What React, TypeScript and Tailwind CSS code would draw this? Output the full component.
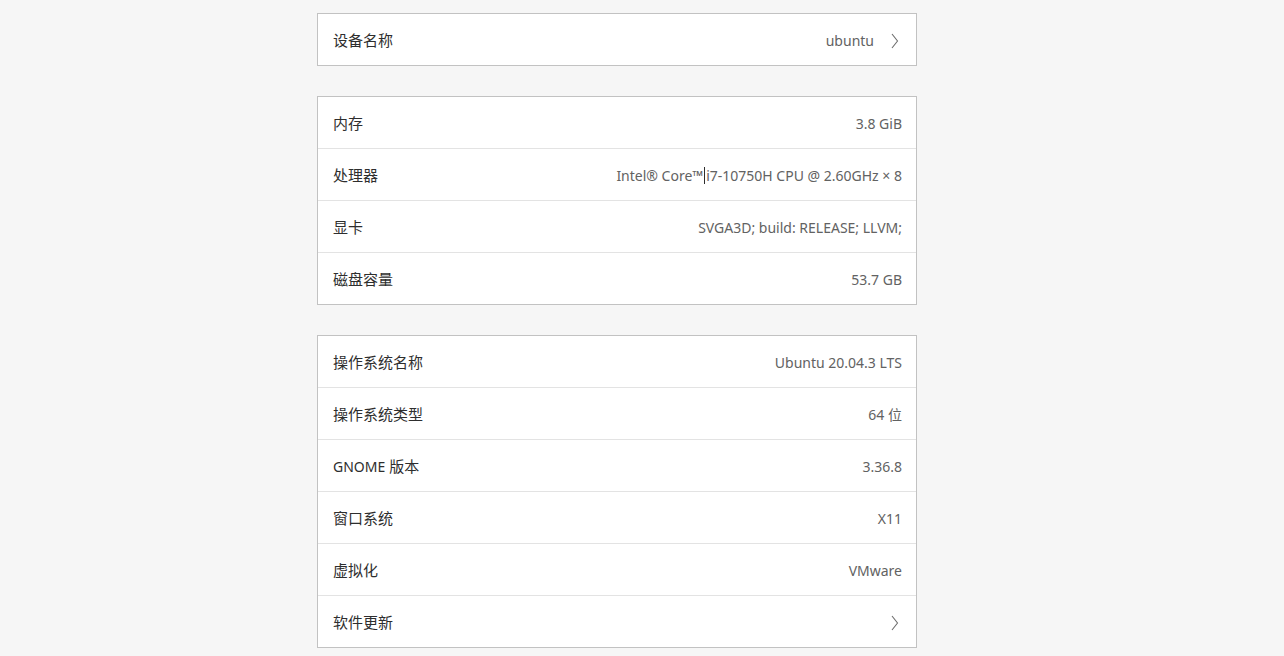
import React from 'react';

type Row = { label: string; value?: string; chevron?: boolean; caret?: boolean };

const groups: Row[][] = [
  [{ label: '设备名称', value: 'ubuntu', chevron: true }],
  [
    { label: '内存', value: '3.8 GiB' },
    { label: '处理器', value: 'Intel® Core™ i7-10750H CPU @ 2.60GHz × 8', caret: true },
    { label: '显卡', value: 'SVGA3D; build: RELEASE; LLVM;' },
    { label: '磁盘容量', value: '53.7 GB' },
  ],
  [
    { label: '操作系统名称', value: 'Ubuntu 20.04.3 LTS' },
    { label: '操作系统类型', value: '64 位' },
    { label: 'GNOME 版本', value: '3.36.8' },
    { label: '窗口系统', value: 'X11' },
    { label: '虚拟化', value: 'VMware' },
    { label: '软件更新', chevron: true },
  ],
];

function Chevron() {
  return (
    <svg width="8" height="16" viewBox="0 0 8 16" className="ml-[17px] mr-[3px] shrink-0">
      <polyline points="1,1 6.5,8 1,15" fill="none" stroke="#6e6e6e" strokeWidth="1.1" />
    </svg>
  );
}

function Label({ text }: { text: string }) {
  // latin words in labels render a little tighter than the CJK glyphs
  if (text.startsWith('GNOME')) {
    return (
      <span className="text-[15px] text-[#2e2e2e]">
        <span className="text-[14px]">GNOME</span> 版本
      </span>
    );
  }
  return <span className="text-[15px] text-[#2e2e2e]">{text}</span>;
}

function Value({ row }: { row: Row }) {
  if (!row.value) return null;
  if (row.caret) {
    const [a, b] = row.value.split('™ ');
    return (
      <span className="flex items-center">
        {a}™<span className="mx-[1px] inline-block h-[17px] w-px bg-[#2e2e2e]" />
        {b}
      </span>
    );
  }
  return <span>{row.value}</span>;
}

function Card({ rows }: { rows: Row[] }) {
  return (
    <div className="w-[600px] border border-[#c2c2c2] bg-white">
      {rows.map((row, i) => (
        <div
          key={row.label}
          className={`flex items-center justify-between pl-[15px] pr-[14px] pt-[2px] ${
            i > 0 ? 'h-[52px] border-t border-[#e3e3e3]' : 'h-[51px]'
          }`}
        >
          <Label text={row.label} />
          <div className="flex items-center text-[14px] text-[#626262]">
            <Value row={row} />
            {row.chevron && <Chevron />}
          </div>
        </div>
      ))}
    </div>
  );
}

export default function App() {
  return (
    <div
      className="flex min-h-[656px] w-full flex-col items-center gap-[30px] bg-[#f6f6f6] pr-[50px] pt-[13px]"
      style={{ fontFamily: '"Noto Sans", "Noto Sans CJK SC", sans-serif' }}
    >
      {groups.map((rows, i) => (
        <Card key={i} rows={rows} />
      ))}
    </div>
  );
}
